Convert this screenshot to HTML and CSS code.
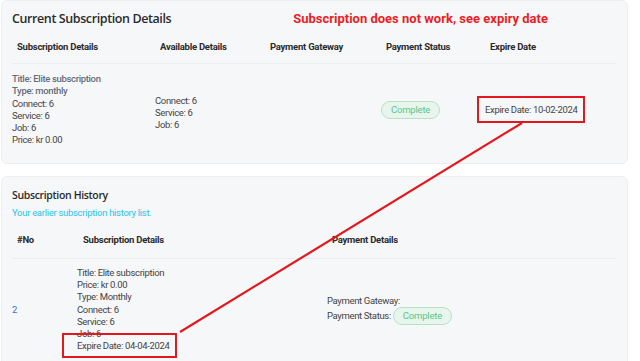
FILE: index.html
```html
<!DOCTYPE html>
<html lang="en">
<head>
  <meta charset="UTF-8" />
  <meta name="viewport" content="width=device-width, initial-scale=1.0"/>
  <title>Subscription</title>
  <link rel="stylesheet" href="styles.css">
</head>
<body>

<div class="page">

  <section class="card current">
    <div class="card-head">
      <h2>Current Subscription Details</h2>
      <p class="note">Subscription does not work, see expiry date</p>
    </div>

    <table class="sub-table">
      <colgroup>
        <col style="width:143px"><col style="width:110px"><col style="width:116px"><col style="width:104px"><col>
      </colgroup>
      <thead>
        <tr>
          <th>Subscription Details</th>
          <th>Available Details</th>
          <th>Payment Gateway</th>
          <th>Payment Status</th>
          <th>Expire Date</th>
        </tr>
      </thead>
      <tbody>
        <tr>
          <td>
            <div class="strong">Title: Elite subscription</div>
            <div class="strong">Type: monthly</div>
            <div>Connect: 6</div>
            <div>Service: 6</div>
            <div>Job: 6</div>
            <div>Price: kr 0.00</div>
          </td>
          <td class="avail">
            <div>Connect: 6</div>
            <div>Service: 6</div>
            <div>Job: 6</div>
          </td>
          <td></td>
          <td><span class="badge">Complete</span></td>
          <td><span class="mark mark-top">Expire Date: 10-02-2024</span></td>
        </tr>
      </tbody>
    </table>
  </section>

  <section class="card history">
    <h3>Subscription History</h3>
    <p class="sub">Your earlier subscription history list.</p>

    <table class="sub-table hist-table">
      <colgroup>
        <col style="width:65px"><col style="width:250px"><col>
      </colgroup>
      <thead>
        <tr>
          <th>#No</th>
          <th class="th-details">Subscription Details</th>
          <th>Payment Details</th>
        </tr>
      </thead>
      <tbody>
        <tr>
          <td><a href="#" class="num">2</a></td>
          <td>
            <div>Title: Elite subscription</div>
            <div>Price: kr 0.00</div>
            <div>Type: Monthly</div>
            <div>Connect: 6</div>
            <div>Service: 6</div>
            <div>Job: 6</div>
            <div><span class="mark mark-bottom">Expire Date: 04-04-2024</span></div>
          </td>
          <td class="pay">
            <div>Payment Gateway:</div>
            <div>Payment Status: <span class="badge">Complete</span></div>
          </td>
        </tr>
      </tbody>
    </table>
  </section>

  <!-- annotation arrow between the two dates -->
  <svg class="arrow" width="640" height="361" viewBox="0 0 640 361">
    <line x1="522" y1="123" x2="180" y2="332" stroke="#e4171e" stroke-width="2.2"/>
  </svg>

</div>

</body>
</html>
```

FILE: styles.css
```css
* { box-sizing: border-box; margin: 0; padding: 0; }
body {
  background: #fff;
  color: #444;
  font-family: Roboto, "Liberation Sans", sans-serif;
  font-size: 9.5px;
  letter-spacing: -0.35px;
}

.page {
  position: relative;
  width: 640px;
  height: 361px;
  overflow: hidden;
  padding: 0 12px 0 1px;
}

.card {
  background: #f6f7f9;
  border: 1px solid #eceef2;
  border-radius: 6px;
  padding: 0 10px 0 10px;
}
.current { height: 164px; }
.history { margin-top: 12px; height: 200px; }

.card-head {
  display: flex;
  align-items: center;
  height: 35px;
}
.card-head h2 {
  font-family: "Open Sans", "Noto Sans", sans-serif;
  font-size: 12.5px;
  font-weight: 600;
  letter-spacing: -0.4px;
  color: #2b2b2b;
}
.note {
  margin-left: auto;
  margin-right: 69px;
  color: #ee1c24;
  font-size: 13px;
  font-weight: 700;
  letter-spacing: 0;
}

.sub-table {
  width: 100%;
  border-collapse: collapse;
  table-layout: fixed;
}
.sub-table th {
  text-align: left;
  font-size: 9.5px;
  font-weight: 700;
  letter-spacing: -0.25px;
  line-height: 12px;
  color: #2b2b2b;
  padding: 5px 0 10px 5px;
  border-bottom: 1px solid #ebedf0;
}
.sub-table td {
  vertical-align: middle;
  line-height: 12.2px;
}
.current .sub-table tbody tr { height: 92px; }
.strong { font-weight: 500; color: #676d78; }
.avail { padding-top: 7px; }

.badge {
  display: inline-block;
  padding: 2px 9px;
  border: 1px solid #b8e2c8;
  border-radius: 10px;
  background: #e7f5ec;
  color: #5cc58b;
  font-size: 9.5px;
  letter-spacing: -0.2px;
  line-height: 12px;
}

.mark {
  border: 2px solid #e4171e;
}
.mark-top {
  margin-left: -8px;
  padding: 6px 6px 6px 6px;
}
.mark-bottom {
  margin-left: -15px;
  padding: 5px 6px 5px 13px;
}

.history h3 {
  font-family: "Open Sans", "Noto Sans", sans-serif;
  font-size: 10.5px;
  font-weight: 600;
  letter-spacing: -0.35px;
  line-height: 14px;
  color: #2b2b2b;
  margin-top: 11px;
}
.sub {
  color: #29c4ec;
  line-height: 12px;
  letter-spacing: -0.3px;
  margin-top: 5px;
}
.hist-table { margin-top: 10px; }
.hist-table th { padding-bottom: 12px; }
.hist-table .th-details { padding-left: 6px; }
.hist-table tbody tr { height: 102px; }
.num { color: #3e6bd8; text-decoration: none; }

.arrow {
  position: absolute;
  left: 0;
  top: 0;
  pointer-events: none;
}
```
